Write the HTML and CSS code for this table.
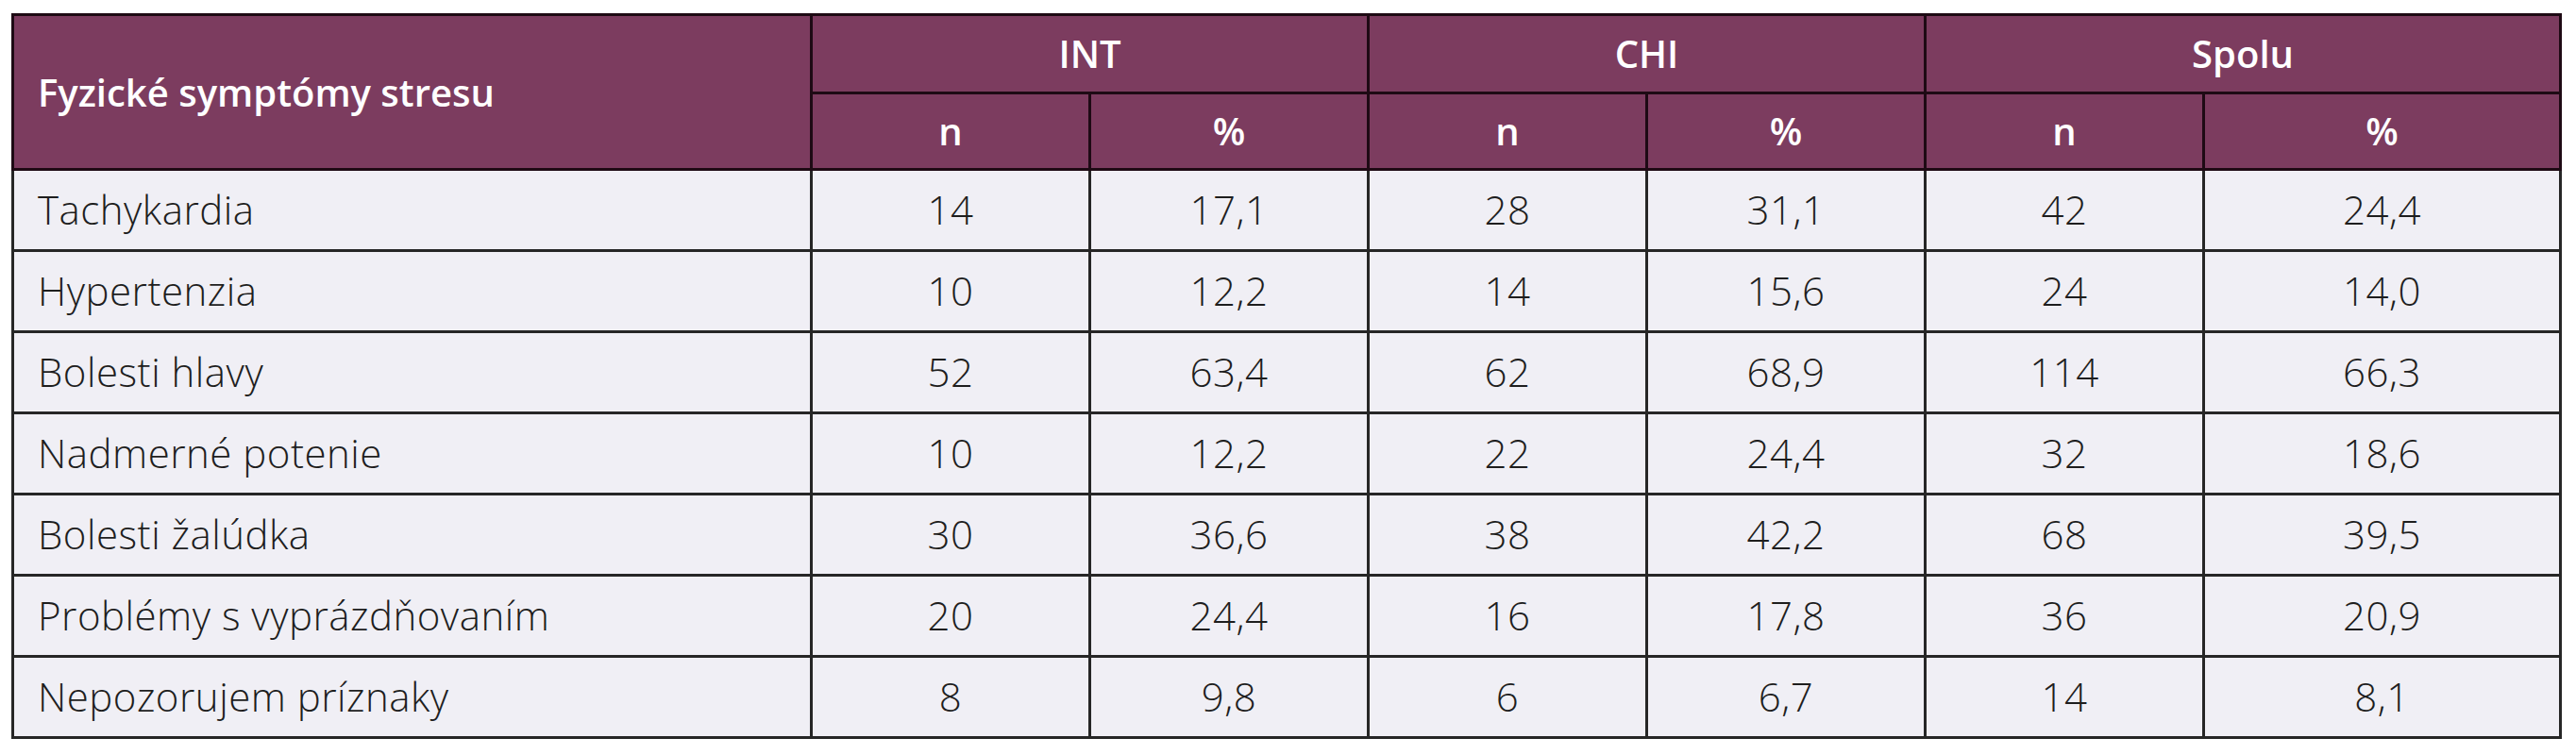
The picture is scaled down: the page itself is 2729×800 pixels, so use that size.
FILE: index.html
```html
<!DOCTYPE html>
<html lang="sk">
<head>
<meta charset="utf-8">
<title>Fyzické symptómy stresu</title>
<link rel="stylesheet" href="styles.css">
</head>
<body>
<table class="stats">
  <colgroup>
    <col class="c-label">
    <col class="c-num">
    <col class="c-num">
    <col class="c-num">
    <col class="c-num">
    <col class="c-num">
    <col class="c-last">
  </colgroup>
  <thead>
    <tr class="h1">
      <th class="label" rowspan="2">Fyzické symptómy stresu</th>
      <th colspan="2">INT</th>
      <th colspan="2">CHI</th>
      <th colspan="2">Spolu</th>
    </tr>
    <tr class="h2">
      <th>n</th><th>%</th><th>n</th><th>%</th><th>n</th><th>%</th>
    </tr>
  </thead>
  <tbody>
    <tr><td class="label">Tachykardia</td><td>14</td><td>17,1</td><td>28</td><td>31,1</td><td>42</td><td>24,4</td></tr>
    <tr><td class="label">Hypertenzia</td><td>10</td><td>12,2</td><td>14</td><td>15,6</td><td>24</td><td>14,0</td></tr>
    <tr><td class="label">Bolesti hlavy</td><td>52</td><td>63,4</td><td>62</td><td>68,9</td><td>114</td><td>66,3</td></tr>
    <tr><td class="label">Nadmerné potenie</td><td>10</td><td>12,2</td><td>22</td><td>24,4</td><td>32</td><td>18,6</td></tr>
    <tr><td class="label">Bolesti žalúdka</td><td>30</td><td>36,6</td><td>38</td><td>42,2</td><td>68</td><td>39,5</td></tr>
    <tr><td class="label">Problémy s vyprázdňovaním</td><td>20</td><td>24,4</td><td>16</td><td>17,8</td><td>36</td><td>20,9</td></tr>
    <tr><td class="label">Nepozorujem príznaky</td><td>8</td><td>9,8</td><td>6</td><td>6,7</td><td>14</td><td>8,1</td></tr>
  </tbody>
</table>
</body>
</html>
```

FILE: styles.css
```css
html, body {
  margin: 0;
  padding: 0;
  background: #ffffff;
}

body {
  padding: 14px 0 0 12px;
}

.stats {
  border-collapse: collapse;
  table-layout: fixed;
  width: 2699px;
  font-family: "Open Sans", "DejaVu Sans Condensed", sans-serif;
  color: #1e1e1e;
}

.c-label { width: 846px; }
.c-num { width: 295px; }
.c-last { width: 378px; }

.stats th,
.stats td {
  border: 3px solid #1f1a1d;
  padding: 0;
  text-align: center;
  vertical-align: middle;
  line-height: 1.2;
}

.stats thead th {
  background: #7c3c5f;
  color: #ffffff;
  font-weight: 600;
  font-size: 40px;
  border-color: #1e0a14;
}

.h1 th { height: 80px; }
.h2 th { height: 78px; }

.stats tbody td {
  background: #f0eff5;
  font-weight: 300;
  font-size: 42px;
  letter-spacing: 0.5px;
  height: 83px;
  border-color: #262626;
}

.stats .label {
  text-align: left;
  padding-left: 25px;
}
```
